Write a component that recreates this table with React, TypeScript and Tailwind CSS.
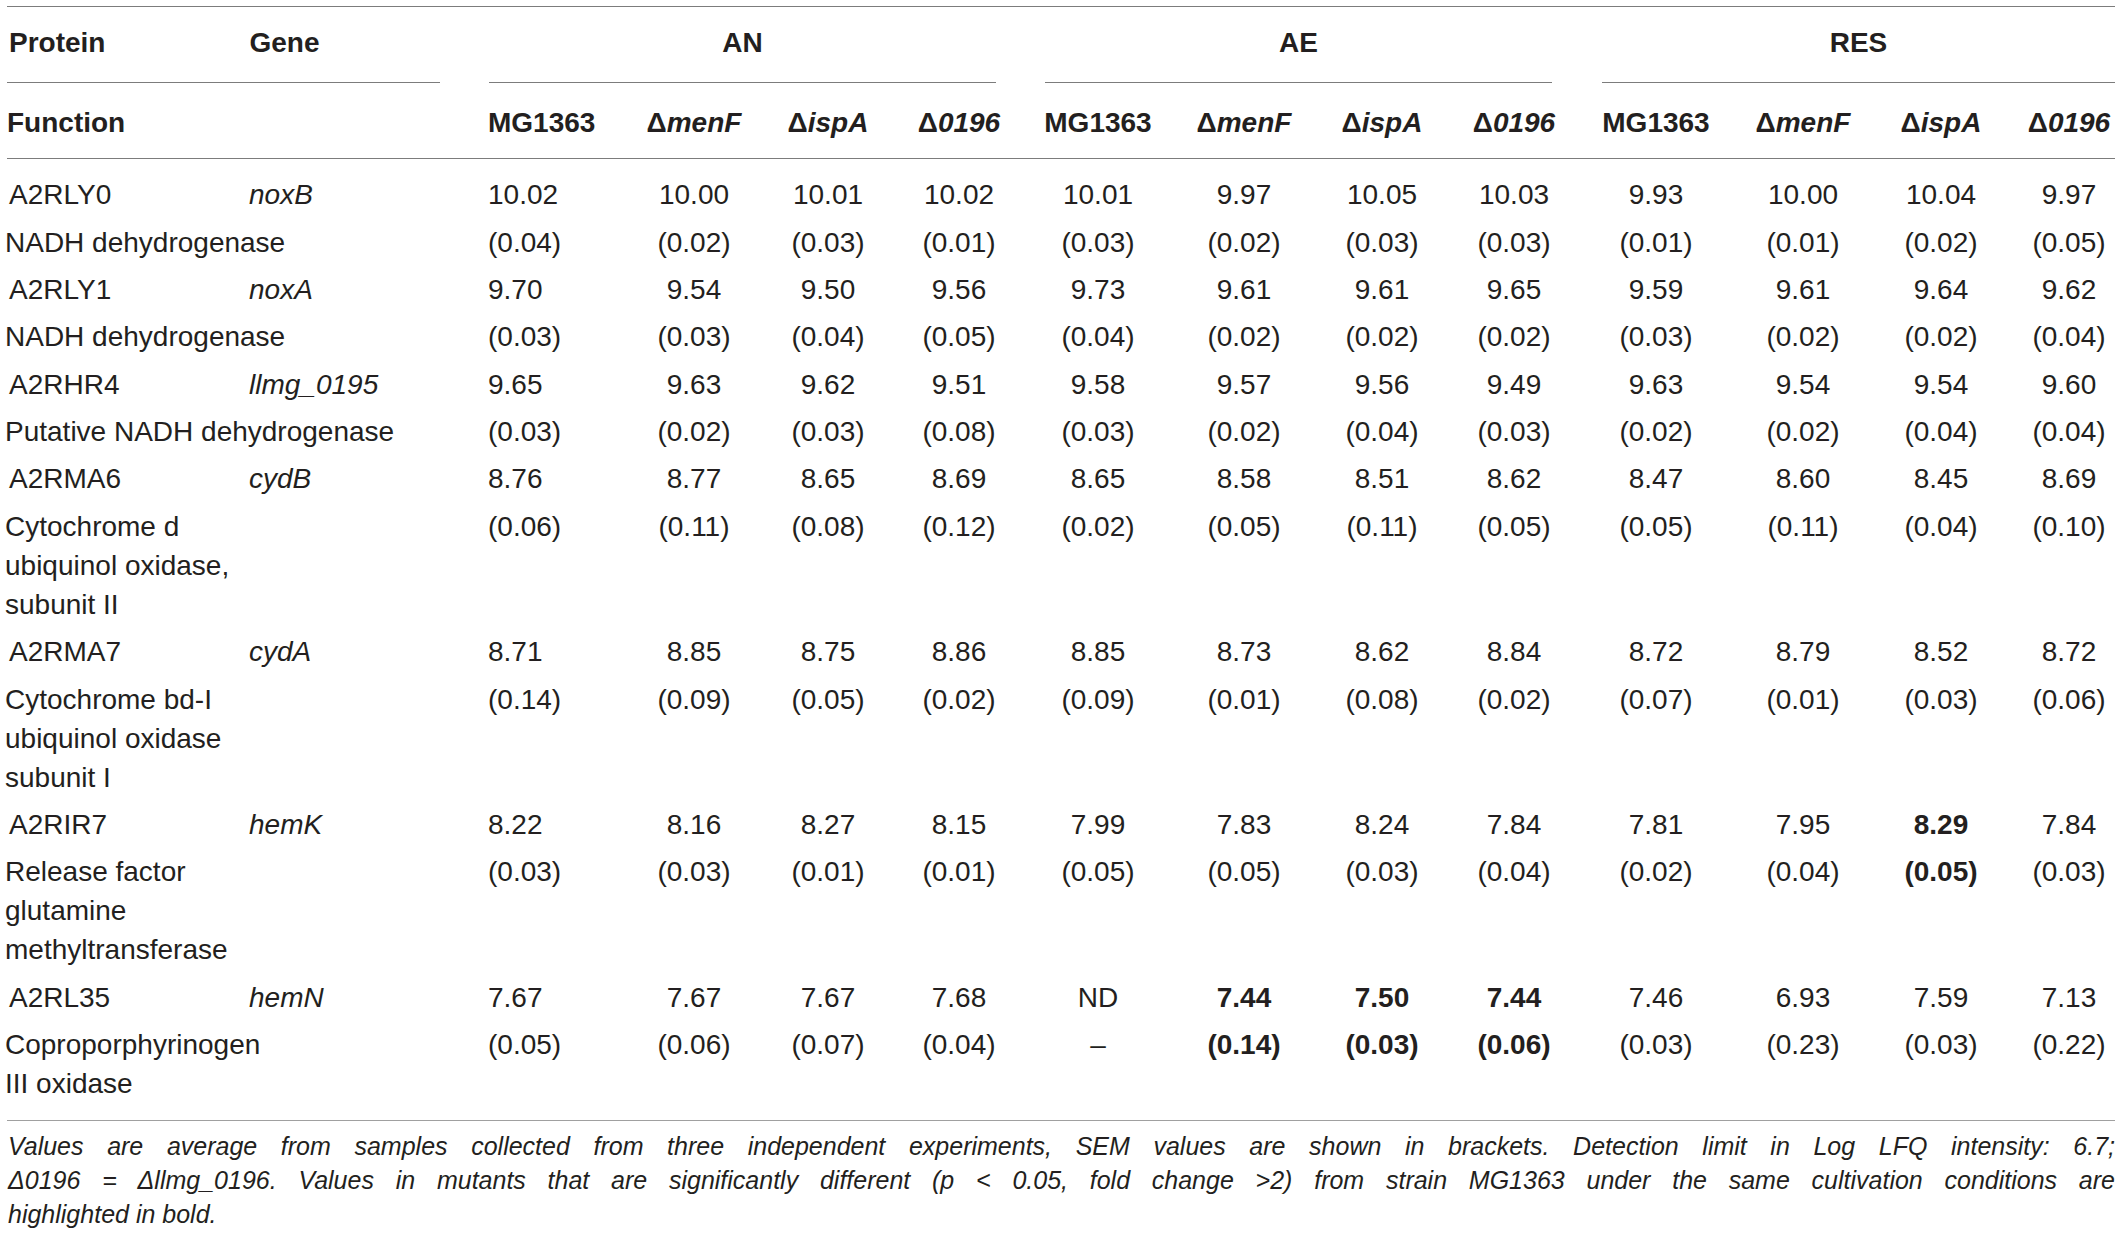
import React from "react";

const COLS =
  "grid grid-cols-[244px_239px_138px_136px_132px_130px_148px_144px_132px_132px_152px_142px_134px_107px]";

// cell alignment for the 12 value columns
const cellCls = [
  "text-left",
  "text-center",
  "text-center",
  "text-center",
  "text-center",
  "text-center",
  "text-center",
  "text-center",
  "text-center",
  "text-center",
  "text-center",
  "text-center pl-[15px]",
];

type Row = {
  protein: string;
  gene: string;
  fn: string[];
  vals: string[];
  sem: string[];
};

// values prefixed with * are shown in bold
const rows: Row[] = [
  {
    protein: "A2RLY0",
    gene: "noxB",
    fn: ["NADH dehydrogenase"],
    vals: ["10.02", "10.00", "10.01", "10.02", "10.01", "9.97", "10.05", "10.03", "9.93", "10.00", "10.04", "9.97"],
    sem: ["(0.04)", "(0.02)", "(0.03)", "(0.01)", "(0.03)", "(0.02)", "(0.03)", "(0.03)", "(0.01)", "(0.01)", "(0.02)", "(0.05)"],
  },
  {
    protein: "A2RLY1",
    gene: "noxA",
    fn: ["NADH dehydrogenase"],
    vals: ["9.70", "9.54", "9.50", "9.56", "9.73", "9.61", "9.61", "9.65", "9.59", "9.61", "9.64", "9.62"],
    sem: ["(0.03)", "(0.03)", "(0.04)", "(0.05)", "(0.04)", "(0.02)", "(0.02)", "(0.02)", "(0.03)", "(0.02)", "(0.02)", "(0.04)"],
  },
  {
    protein: "A2RHR4",
    gene: "llmg_0195",
    fn: ["Putative NADH dehydrogenase"],
    vals: ["9.65", "9.63", "9.62", "9.51", "9.58", "9.57", "9.56", "9.49", "9.63", "9.54", "9.54", "9.60"],
    sem: ["(0.03)", "(0.02)", "(0.03)", "(0.08)", "(0.03)", "(0.02)", "(0.04)", "(0.03)", "(0.02)", "(0.02)", "(0.04)", "(0.04)"],
  },
  {
    protein: "A2RMA6",
    gene: "cydB",
    fn: ["Cytochrome d", "ubiquinol oxidase,", "subunit II"],
    vals: ["8.76", "8.77", "8.65", "8.69", "8.65", "8.58", "8.51", "8.62", "8.47", "8.60", "8.45", "8.69"],
    sem: ["(0.06)", "(0.11)", "(0.08)", "(0.12)", "(0.02)", "(0.05)", "(0.11)", "(0.05)", "(0.05)", "(0.11)", "(0.04)", "(0.10)"],
  },
  {
    protein: "A2RMA7",
    gene: "cydA",
    fn: ["Cytochrome bd-I", "ubiquinol oxidase", "subunit I"],
    vals: ["8.71", "8.85", "8.75", "8.86", "8.85", "8.73", "8.62", "8.84", "8.72", "8.79", "8.52", "8.72"],
    sem: ["(0.14)", "(0.09)", "(0.05)", "(0.02)", "(0.09)", "(0.01)", "(0.08)", "(0.02)", "(0.07)", "(0.01)", "(0.03)", "(0.06)"],
  },
  {
    protein: "A2RIR7",
    gene: "hemK",
    fn: ["Release factor", "glutamine", "methyltransferase"],
    vals: ["8.22", "8.16", "8.27", "8.15", "7.99", "7.83", "8.24", "7.84", "7.81", "7.95", "*8.29", "7.84"],
    sem: ["(0.03)", "(0.03)", "(0.01)", "(0.01)", "(0.05)", "(0.05)", "(0.03)", "(0.04)", "(0.02)", "(0.04)", "*(0.05)", "(0.03)"],
  },
  {
    protein: "A2RL35",
    gene: "hemN",
    fn: ["Coproporphyrinogen", "III oxidase"],
    vals: ["7.67", "7.67", "7.67", "7.68", "ND", "*7.44", "*7.50", "*7.44", "7.46", "6.93", "7.59", "7.13"],
    sem: ["(0.05)", "(0.06)", "(0.07)", "(0.04)", "–", "*(0.14)", "*(0.03)", "*(0.06)", "(0.03)", "(0.23)", "(0.03)", "(0.22)"],
  },
];

const strains = ["menF", "ispA", "0196"];

function Cell({ v, i }: { v: string; i: number }) {
  const bold = v.startsWith("*");
  return <div className={`${cellCls[i]} ${bold ? "font-bold" : ""}`}>{bold ? v.slice(1) : v}</div>;
}

function Line({ className = "" }: { className?: string }) {
  return <div className={`h-px bg-[#7c7c7c] ${className}`} />;
}

export default function App() {
  return (
    <div className="min-h-[1244px] w-[2120px] bg-white pt-[6px] font-['Liberation_Sans',Arial,sans-serif] text-[28px] text-[#231f20]">
      <div className="ml-[5px] w-[2110px]">
        <Line className="ml-[2px]" />

        {/* group header */}
        <div className={`${COLS} pt-[15.5px] font-bold leading-[39px]`}>
          <div className="col-span-2 mr-[48px] ml-[2px]">
            <div className="flex gap-[144px] pl-[2px]">
              <span>Protein</span>
              <span>Gene</span>
            </div>
            <Line className="mt-[20.5px]" />
          </div>
          <div className="col-span-4 mr-[28px] ml-px">
            <div className="text-center">AN</div>
            <Line className="mt-[20.5px]" />
          </div>
          <div className="col-span-4 mr-[28px] ml-[21px]">
            <div className="text-center">AE</div>
            <Line className="mt-[20.5px]" />
          </div>
          <div className="col-span-4 ml-[22px]">
            <div className="text-center">RES</div>
            <Line className="mt-[20.5px]" />
          </div>
        </div>

        {/* strain header */}
        <div className={`${COLS} pt-[20px] font-bold leading-[39px]`}>
          <div className="col-span-2 pl-[2px]">Function</div>
          {[0, 1, 2].map((g) => (
            <React.Fragment key={g}>
              <div className={cellCls[g * 4]}>MG1363</div>
              {strains.map((s, k) => (
                <div key={s} className={cellCls[g * 4 + k + 1]}>
                  Δ<i>{s}</i>
                </div>
              ))}
            </React.Fragment>
          ))}
        </div>
        <Line className="mt-[16px] ml-[2px]" />

        <div className="pt-[12px] pb-[13px] leading-[39px]">
          {rows.map((r) => (
            <React.Fragment key={r.protein}>
              <div className={`${COLS} py-[4.2px]`}>
                <div className="pl-[4px]">{r.protein}</div>
                <div className="italic">{r.gene}</div>
                {r.vals.map((v, i) => (
                  <Cell key={i} v={v} i={i} />
                ))}
              </div>
              <div className={`${COLS} py-[4.2px]`}>
                <div className="col-span-2 whitespace-nowrap">
                  {r.fn.map((t) => (
                    <div key={t}>{t}</div>
                  ))}
                </div>
                {r.sem.map((v, i) => (
                  <Cell key={i} v={v} i={i} />
                ))}
              </div>
            </React.Fragment>
          ))}
        </div>
        <Line className="ml-[2px] bg-[#a0a0a0]" />

        <div className="mt-[8px] pl-[3px] text-[25px] leading-[34px] italic">
          <div className="text-justify [text-align-last:justify]">
            Values are average from samples collected from three independent experiments, SEM values are shown in
            brackets. Detection limit in Log LFQ intensity: 6.7;
          </div>
          <div className="text-justify [text-align-last:justify]">
            Δ0196 = Δllmg_0196. Values in mutants that are significantly different (p &lt; 0.05, fold change &gt;2) from
            strain MG1363 under the same cultivation conditions are
          </div>
          <div>highlighted in bold.</div>
        </div>
      </div>
    </div>
  );
}
